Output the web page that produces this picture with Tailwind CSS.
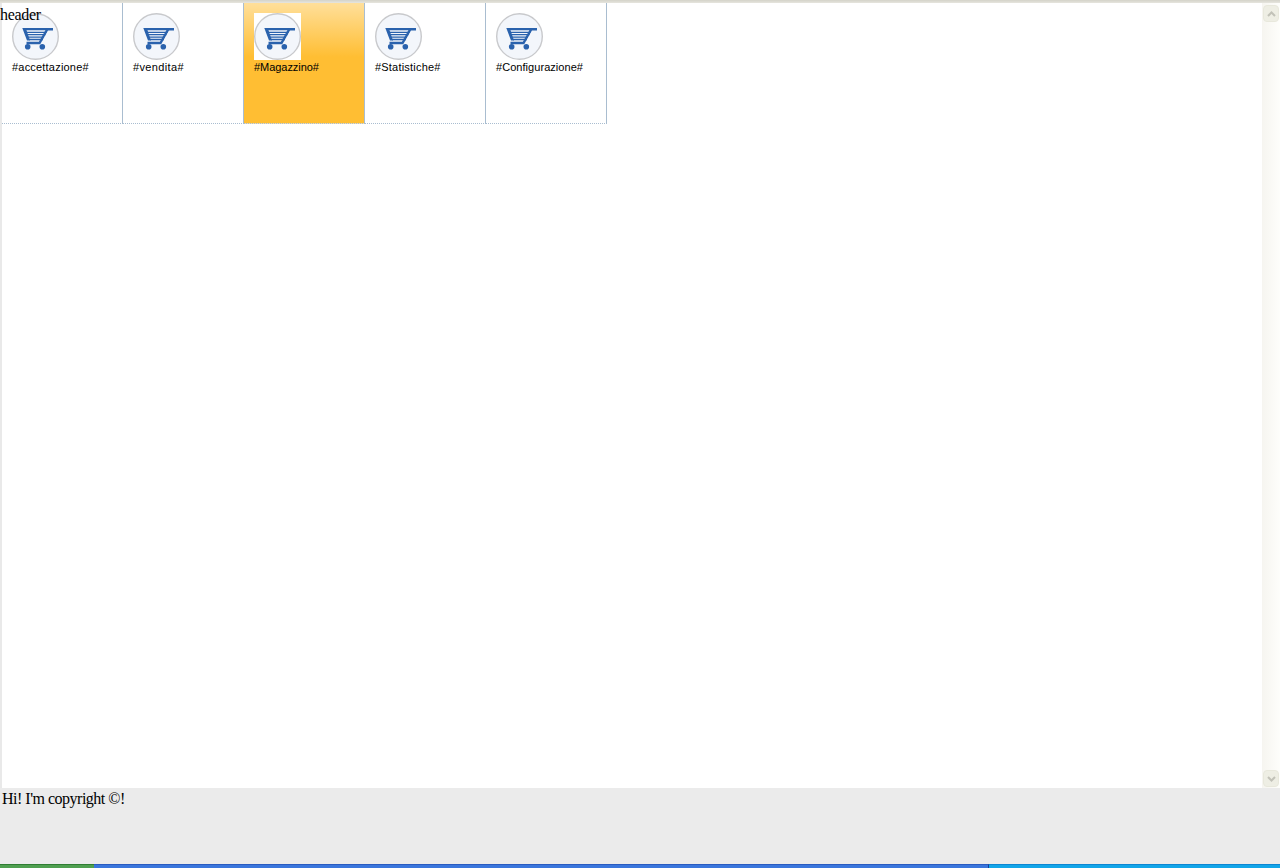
<!DOCTYPE html>
<html lang="en">
<head>
  <meta charset="UTF-8">
  <title>header</title>
  <script src="https://cdn.jsdelivr.net/npm/@tailwindcss/browser@4"></script>
</head>
<body class="w-[1280px] h-[868px] overflow-hidden bg-white flex flex-col font-['Liberation_Serif',serif] text-black">
  <svg width="0" height="0" class="absolute">
    <defs>
      <g id="cart">
        <circle cx="23.500" cy="23.500" r="22.800" fill="#f3f6fb" stroke="#c8c9cc" stroke-width="1.400"/>
        <!-- basket: thick left edge, stripes, lower bar -->
        <path d="M10.300 15H36V17.300H14.500l3.500 10.200H15z" fill="#2a62ad"/>
        <path d="M14 19.300h20.500M15 21.700h18.500M16 24.100h16M17 26.500h14" stroke="#2a62ad" stroke-width="1.300"/>
        <path d="M41 16.200H35.300L27.500 30H14.500" fill="none" stroke="#2a62ad" stroke-width="2.400"/>
        <circle cx="15.700" cy="33.800" r="2.800" fill="#2a62ad"/>
        <circle cx="30.300" cy="33.800" r="2.800" fill="#2a62ad"/>
      </g>
    </defs>
  </svg>

  <div class="h-[3px] shrink-0 bg-[linear-gradient(#d4d3c9,#e6e5de)]"></div>

  <div class="relative flex h-[785px] shrink-0 border-l-2 border-[#e9e9e9]">
    <!-- header text sits on top of the tab strip -->
    <span class="absolute left-[-2px] top-[3px] text-base leading-[18px] tracking-[-0.33px]">header</span>

    <div class="flex-1 flex items-start">
      <div class="w-[121px] h-[121px] border-r border-b border-r-[#a9bdd0] border-b-[#a9bdd0] [border-bottom-style:dotted] pl-[10px] pt-[10px]">
        <svg width="47" height="47" class="block"><use href="#cart"/></svg>
        <div class="font-['Liberation_Sans',sans-serif] text-[11px] leading-[12px] tracking-[0.2px] mt-[1px]">#accettazione#</div>
      </div>
      <div class="w-[121px] h-[121px] border-r border-b border-r-[#a9bdd0] border-b-[#a9bdd0] [border-bottom-style:dotted] pl-[10px] pt-[10px]">
        <svg width="47" height="47" class="block"><use href="#cart"/></svg>
        <div class="font-['Liberation_Sans',sans-serif] text-[11px] leading-[12px] tracking-[0.35px] mt-[1px]">#vendita#</div>
      </div>
      <div class="w-[121px] h-[121px] border-r border-b border-r-[#a9bdd0] border-b-[#a9bdd0] [border-bottom-style:dotted] pl-[10px] pt-[10px] bg-[linear-gradient(#ffdf9a_0%,#ffbe33_45%,#ffbe33_100%)]">
        <svg width="47" height="47" class="block bg-white"><use href="#cart"/></svg>
        <div class="font-['Liberation_Sans',sans-serif] text-[11px] leading-[12px] tracking-[-0.05px] mt-[1px]">#Magazzino#</div>
      </div>
      <div class="w-[121px] h-[121px] border-r border-b border-r-[#a9bdd0] border-b-[#a9bdd0] [border-bottom-style:dotted] pl-[10px] pt-[10px]">
        <svg width="47" height="47" class="block"><use href="#cart"/></svg>
        <div class="font-['Liberation_Sans',sans-serif] text-[11px] leading-[12px] tracking-[0.2px] mt-[1px]">#Statistiche#</div>
      </div>
      <div class="w-[121px] h-[121px] border-r border-b border-r-[#a9bdd0] border-b-[#a9bdd0] [border-bottom-style:dotted] pl-[10px] pt-[10px]">
        <svg width="47" height="47" class="block"><use href="#cart"/></svg>
        <div class="font-['Liberation_Sans',sans-serif] text-[11px] leading-[12px] tracking-[0.05px] mt-[1px]">#Configurazione#</div>
      </div>
    </div>

    <!-- scrollbar -->
    <div class="w-[18px] shrink-0 flex flex-col justify-between bg-[linear-gradient(90deg,#f6f5f0,#fefefb)]">
      <div class="h-[17px] mx-px mt-[2px] rounded-sm border border-[#e8e8dc] bg-[#eeeee4] flex items-center justify-center">
        <svg width="9" height="6" viewBox="0 0 9 6"><path d="M1 5l3.500-3.500L8 5" fill="none" stroke="#c2c2b8" stroke-width="2"/></svg>
      </div>
      <div class="h-[17px] mx-px mb-px rounded-sm border border-[#e8e8dc] bg-[#eeeee4] flex items-center justify-center">
        <svg width="9" height="6" viewBox="0 0 9 6"><path d="M1 1l3.500 3.500L8 1" fill="none" stroke="#c2c2b8" stroke-width="2"/></svg>
      </div>
    </div>
  </div>

  <div class="h-[76px] shrink-0 bg-[#ebebeb] pl-[2px] pt-[2px] text-base leading-[18px] tracking-[-0.5px]">Hi! I'm copyright ©!</div>

  <!-- taskbar edge -->
  <div class="h-[4px] shrink-0 flex">
    <div class="w-[94px] bg-[#4f9f50] border-t border-[#2f7d33]"></div>
    <div class="w-[895px] bg-[#3a76dc] border-t border-[#2a5bc0] border-r border-r-[#123f96]"></div>
    <div class="flex-1 bg-[#12a5e8] border-t border-[#0d86d2]"></div>
  </div>
</body>
</html>
